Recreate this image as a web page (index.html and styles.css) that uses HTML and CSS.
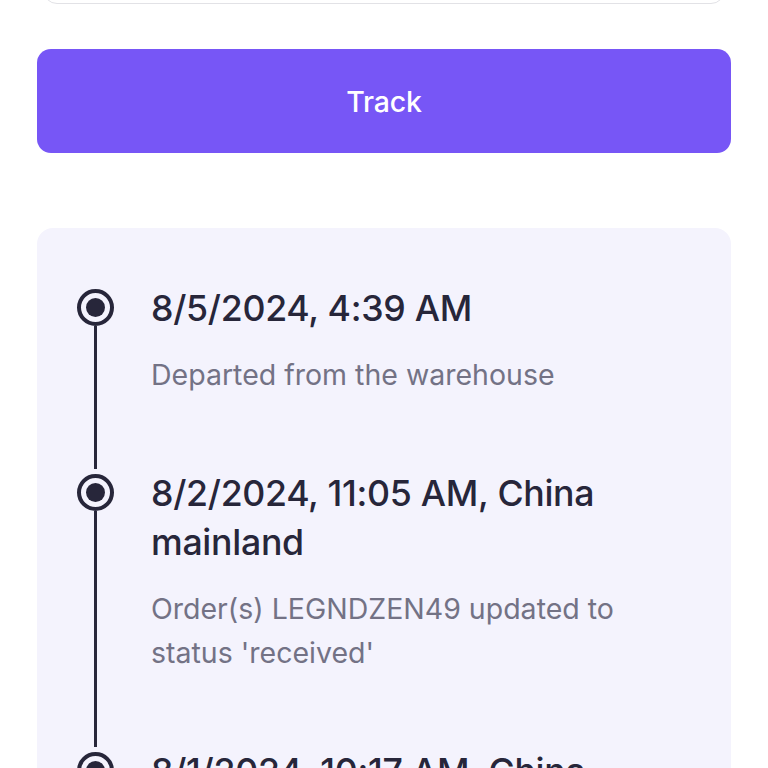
FILE: index.html
```html
<!DOCTYPE html>
<html lang="en">
<head>
    <meta charset="UTF-8">
    <meta name="viewport" content="width=device-width, initial-scale=1.0">
    <title>Track order</title>
    <link rel="stylesheet" href="styles.css">
</head>
<body>
    <main class="page">
        <div class="search-input"></div>
        <button class="btn-track">Track</button>

        <section class="timeline">
            <div class="step">
                <div class="marker">
                    <span class="dot"></span>
                    <span class="line"></span>
                </div>
                <div class="step-body">
                    <h3>8/5/2024, 4:39 AM</h3>
                    <p>Departed from the warehouse</p>
                </div>
            </div>
            <div class="step">
                <div class="marker">
                    <span class="dot"></span>
                    <span class="line"></span>
                </div>
                <div class="step-body">
                    <h3>8/2/2024, 11:05 AM, China mainland</h3>
                    <p>Order(s) LEGNDZEN49 updated to status 'received'</p>
                </div>
            </div>
            <div class="step">
                <div class="marker">
                    <span class="dot"></span>
                    <span class="line"></span>
                </div>
                <div class="step-body">
                    <h3>8/1/2024, 10:17 AM, China mainland</h3>
                    <p>Order(s) LEGNDZEN49 created</p>
                </div>
            </div>
        </section>
    </main>
</body>
</html>
```

FILE: styles.css
```css
body {
    font-family: Inter, "Noto Sans", sans-serif;
    margin: 0;
    padding: 0;
    background-color: #fff;
    color: #27263a;
}
.page {
    padding: 0 37px;
}
.search-input {
    height: 60px;
    margin: -56px 6px 0;
    border: 1.5px solid #e2e2e6;
    border-radius: 14px;
    box-sizing: border-box;
}
.btn-track {
    display: block;
    width: 100%;
    height: 104px;
    margin-top: 45px;
    border: none;
    border-radius: 14px;
    background-color: #7756f6;
    color: #fff;
    font-family: Inter, sans-serif;
    font-size: 28.5px;
    font-weight: 500;
    letter-spacing: -0.2px;
}
.timeline {
    margin-top: 75px;
    padding: 56px 40px 0 40px;
    background-color: #f4f3fd;
    border-radius: 16px;
    height: 700px;
}
.step {
    display: flex;
}
.marker {
    width: 74px;
    flex-shrink: 0;
    display: flex;
    flex-direction: column;
    align-items: flex-start;
}
.dot {
    width: 37px;
    height: 37px;
    margin-top: 5px;
    border: 4px solid #27263a;
    border-radius: 50%;
    box-sizing: border-box;
    display: flex;
    align-items: center;
    justify-content: center;
}
.dot::after {
    content: "";
    width: 19px;
    height: 19px;
    border-radius: 50%;
    background-color: #27263a;
}
.line {
    flex: 1;
    width: 3px;
    margin-left: 17px;
    background-color: #27263a;
}
.step-body {
    padding-bottom: 72px;
    padding-right: 60px;
}
.step-body h3 {
    margin: 0;
    font-size: 35.7px;
    font-weight: 500;
    line-height: 49px;
    letter-spacing: -0.3px;
}
.step-body p {
    margin: 20px 0 0;
    font-size: 28.5px;
    line-height: 44px;
    color: #737285;
}
```
